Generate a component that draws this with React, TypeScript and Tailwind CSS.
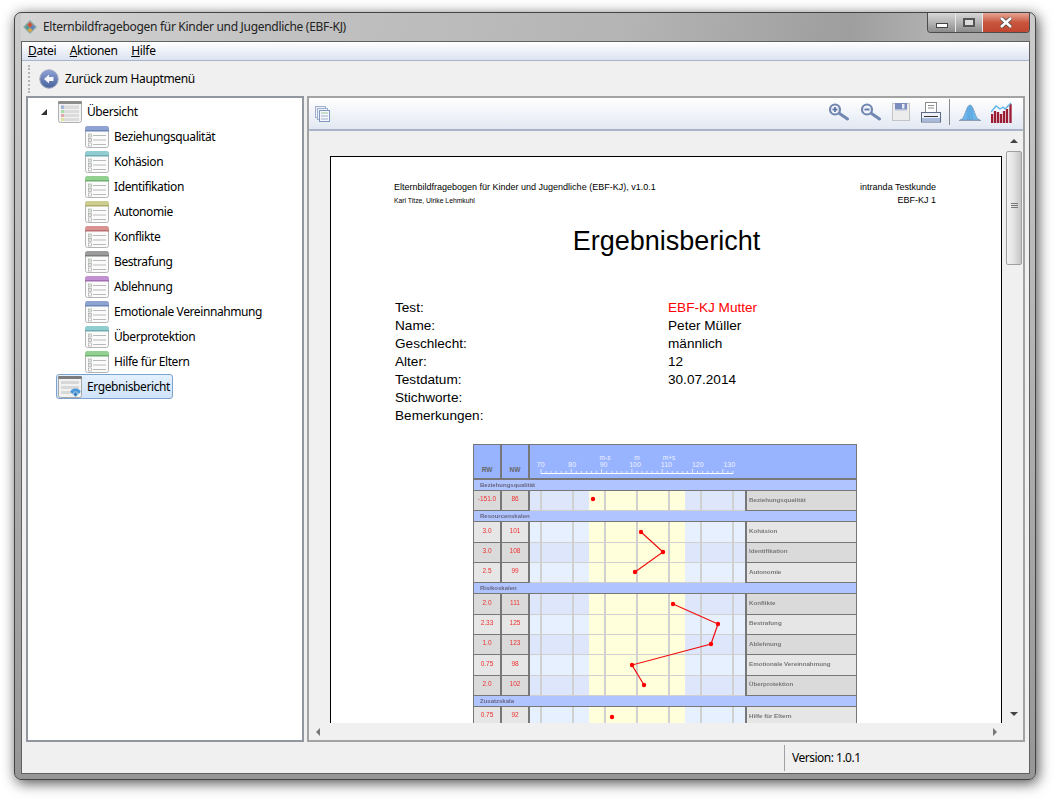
const treeItems = [
  { label: 'Beziehungsqualität', strip: '#8ea3d2', line: '#6f86b8' },
  { label: 'Kohäsion', strip: '#8fcdd0', line: '#6fabb0' },
  { label: 'Identifikation', strip: '#93d193', line: '#6fb06f' },
  { label: 'Autonomie', strip: '#cdcd8f', line: '#adad6c' },
  { label: 'Konflikte', strip: '#d99393', line: '#bb7070' },
  { label: 'Bestrafung', strip: '#9c9c9c', line: '#7c7c7c' },
  { label: 'Ablehnung', strip: '#c191d1', line: '#a06fb2' },
  { label: 'Emotionale Vereinnahmung', strip: '#8ea3d2', line: '#6f86b8' },
  { label: 'Überprotektion', strip: '#8fcdd0', line: '#6fabb0' },
  { label: 'Hilfe für Eltern', strip: '#93d193', line: '#6fb06f' }
]

const meta = [
  ['Test:', 'EBF-KJ Mutter'],
  ['Name:', 'Peter Müller'],
  ['Geschlecht:', 'männlich'],
  ['Alter:', '12'],
  ['Testdatum:', '30.07.2014'],
  ['Stichworte:', ''],
  ['Bemerkungen:', '']
]

// one row of the plot, left to right
const segments = [
  { width: 'w-[10px]', line: false, yellow: false },
  { width: 'w-[32px]', line: true, yellow: false },
  { width: 'w-[17px]', line: true, yellow: false },
  { width: 'w-[15px]', line: false, yellow: true },
  { width: 'w-[32px]', line: true, yellow: true },
  { width: 'w-[32px]', line: true, yellow: true },
  { width: 'w-[17px]', line: true, yellow: true },
  { width: 'w-[15px]', line: false, yellow: false },
  { width: 'w-[32px]', line: true, yellow: false },
  { width: 'w-[13px]', line: true, yellow: false }
]

type Block =
  | { band: string }
  | { rw: string; nw: string; label: string; dark: boolean }

const chartRows: Block[] = [
  { band: 'Beziehungsqualität' },
  { rw: '-151.0', nw: '86', label: 'Beziehungsqualität', dark: true },
  { band: 'Resourcenskalen' },
  { rw: '3.0', nw: '101', label: 'Kohäsion', dark: false },
  { rw: '3.0', nw: '108', label: 'Identifikation', dark: true },
  { rw: '2.5', nw: '99', label: 'Autonomie', dark: false },
  { band: 'Risikoskalen' },
  { rw: '2.0', nw: '111', label: 'Konflikte', dark: true },
  { rw: '2.33', nw: '125', label: 'Bestrafung', dark: false },
  { rw: '1.0', nw: '123', label: 'Ablehnung', dark: true },
  { rw: '0.75', nw: '98', label: 'Emotionale Vereinnahmung', dark: false },
  { rw: '2.0', nw: '102', label: 'Überprotektion', dark: true },
  { band: 'Zusatzskala' },
  { rw: '0.75', nw: '92', label: 'Hilfe für Eltern', dark: false }
]

function AppIcon() {
  return (
    <svg width="16" height="16" viewBox="0 0 16 16">
      <path d="M8 1 L15 8 L8 15 L1 8 Z" fill="#8fa9a8" />
      <path d="M8 3 L11 6 L8 9 L5 6 Z" fill="#c8563c" />
      <path d="M5 6 L8 9 L5.5 11 L3 8 Z" fill="#4f9a94" />
      <path d="M11 6 L13 8 L10.5 11 L8 9 Z" fill="#5c7fc0" />
      <path d="M8 9 L10.5 11 L8 13.5 L5.5 11 Z" fill="#d9a441" />
    </svg>
  )
}

function ListIcon({ strip, line }: { strip: string; line: string }) {
  return (
    <svg className="shrink-0" width="24" height="22" viewBox="0 0 24 22">
      <rect x="0.5" y="0.5" width="23" height="21" rx="2" fill="#fbfbfb" stroke="#b4b4b4" />
      <path d="M0 3 a3 3 0 0 1 3 -3 H21 a3 3 0 0 1 3 3 V4 H0 Z" fill={strip} />
      <rect x="0" y="4" width="24" height="1.5" fill={line} />
      <rect x="3.5" y="8" width="3" height="3" fill="#e4e4e4" stroke="#a8b8a8" strokeWidth="0.7" />
      <rect x="3.5" y="12.5" width="3" height="3" fill="#e4e4e4" stroke="#a8a8a8" strokeWidth="0.7" />
      <rect x="3.5" y="17" width="3" height="3" fill="#fff" stroke="#a8a8a8" strokeWidth="0.7" />
      <path d="M8 9.5 H21 M8 14 H21 M8 18.5 H21" stroke="#b9b9b9" />
    </svg>
  )
}

function RootIcon() {
  return (
    <svg className="shrink-0" width="24" height="22" viewBox="0 0 24 22">
      <rect x="0.5" y="0.5" width="23" height="21" rx="2" fill="#f2f2f2" stroke="#b0b0b0" />
      <rect x="0" y="0" width="24" height="3" rx="1" fill="#8c8c8c" />
      <rect x="3" y="4.5" width="18" height="3.5" fill="#dcdcdc" />
      <rect x="3" y="9" width="18" height="3" fill="#dcdcdc" />
      <rect x="3" y="13" width="18" height="3" fill="#dcdcdc" />
      <rect x="3" y="17" width="18" height="3" fill="#dcdcdc" />
      <rect x="3" y="4.5" width="3" height="3.5" fill="#a3b4dc" />
      <rect x="3" y="9" width="3" height="3" fill="#a8dba8" />
      <rect x="3" y="13" width="3" height="3" fill="#e0a8a8" />
      <rect x="3" y="17" width="3" height="3" fill="#e2e2a0" />
    </svg>
  )
}

function ReportIcon() {
  return (
    <svg className="shrink-0" width="24" height="22" viewBox="0 0 24 22">
      <rect x="0.5" y="0.5" width="23" height="21" rx="2" fill="#f2f2f2" stroke="#a8a8a8" />
      <rect x="0" y="0" width="24" height="3" rx="1" fill="#7c7c7c" />
      <rect x="3" y="5" width="18" height="3" fill="#d8d8d8" />
      <rect x="3" y="10" width="18" height="3" fill="#d8d8d8" />
      <rect x="3" y="15" width="10" height="3" fill="#d8d8d8" />
      <ellipse cx="17.5" cy="15.5" rx="5" ry="3" fill="#4a97d8" />
      <path d="M16 16 H19 V18 H20.5 L17.5 21 L14.5 18 H16 Z" fill="#2f7cc0" stroke="#fff" strokeWidth="0.5" />
    </svg>
  )
}

function BackIcon() {
  return (
    <svg width="20" height="20" viewBox="0 0 20 20">
      <defs>
        <linearGradient id="backFill" x1="0" y1="0" x2="0" y2="1">
          <stop offset="0" stopColor="#8ea2d6" />
          <stop offset="1" stopColor="#47619c" />
        </linearGradient>
      </defs>
      <circle cx="10" cy="10" r="9.2" fill="url(#backFill)" stroke="#9aa6bb" />
      <path d="M5 10 L10 5.5 V8 H14.5 V12 H10 V14.5 Z" fill="#f4f6fb" />
    </svg>
  )
}

function MagnifierIcon({ plus }: { plus?: boolean }) {
  return (
    <svg width="22" height="18" viewBox="0 0 22 18">
      <circle cx="7" cy="6.5" r="5" fill="#eef2fa" stroke="#7187b0" strokeWidth="2.2" />
      <path d="M11.5 10.5 L19.5 16" stroke="#7187b0" strokeWidth="3" strokeLinecap="round" />
      <path d="M4.5 6.5 H9.5" stroke="#5f77a6" strokeWidth="1.8" />
      {plus && <path d="M7 4 V9" stroke="#5f77a6" strokeWidth="1.8" />}
    </svg>
  )
}

function SaveIcon() {
  return (
    <svg width="18" height="18" viewBox="0 0 18 18">
      <rect x="0.5" y="0.5" width="17" height="17" fill="#ececec" stroke="#c4c4c4" />
      <rect x="3" y="0" width="12" height="6.5" fill="#7a8cc0" />
      <rect x="10" y="1" width="2.5" height="4.5" fill="#e8ecf6" />
      <path d="M3 7 H15" stroke="#b9c2d8" />
    </svg>
  )
}

function PrintIcon() {
  return (
    <svg width="20" height="21" viewBox="0 0 20 21">
      <rect x="4.5" y="0.5" width="11" height="10" fill="#fff" stroke="#8b8b8b" />
      <path d="M7 3.5 H13 M7 6 H13" stroke="#8b8b8b" />
      <rect x="0.5" y="10.5" width="19" height="9.5" fill="#eef1f7" stroke="#5d6b86" />
      <rect x="1" y="16" width="18" height="3.5" fill="#a9bbdc" />
      <path d="M3 14.5 H17" stroke="#333" />
    </svg>
  )
}

function BellIcon() {
  return (
    <svg width="22" height="19" viewBox="0 0 22 19">
      <path d="M1 17 C6 17 7 2 11 2 C15 2 16 17 21 17 Z" fill="#69b7ee" stroke="#7f98b8" strokeWidth="0.8" />
      <path d="M9 4 V17 M11 2 V17 M13 4 V17" stroke="#4f95cc" strokeWidth="0.7" />
      <path d="M0 17.5 H22" stroke="#8d9db3" />
    </svg>
  )
}

function BarsIcon() {
  return (
    <svg width="21" height="21" viewBox="0 0 21 21">
      <path d="M1 21 V12 M4 21 V9 M7 21 V10 M10 21 V12 M13 21 V9 M16 21 V7 M19.5 21 V2" stroke="#9c1c34" strokeWidth="2.3" />
      <path d="M0 10 L5 4 L9 7 L12 5 L14 7 L20 1" fill="none" stroke="#5cb2e8" strokeWidth="1.3" />
    </svg>
  )
}

function PagesIcon() {
  return (
    <svg width="15" height="16" viewBox="0 0 15 16">
      <rect x="0.5" y="0.5" width="10" height="11" fill="#eef2f8" stroke="#9fb0cc" />
      <rect x="2.5" y="2.5" width="10" height="11" fill="#eef2f8" stroke="#9fb0cc" />
      <rect x="4.5" y="4.5" width="10" height="11" fill="#f6f8fc" stroke="#7f98c0" />
      <path d="M6 7 H13" stroke="#9cc79c" />
      <path d="M6 10 H13 M6 13 H13" stroke="#9fb0cc" />
    </svg>
  )
}

function Chart() {
  return (
    <div className="relative ml-[79px] h-[300px] w-[384px] overflow-hidden border-x border-t border-[#777777] font-['Liberation_Sans',sans-serif] blur-[0.4px]">
      <div className="flex h-[35px] border-b-2 border-[#777777] bg-[#99b4ff] text-[6.5px]">
        <div className="flex w-[28px] items-end justify-center border-r-2 border-[#777777] pb-[3px] font-bold text-[#666666]">RW</div>
        <div className="flex w-[28px] items-end justify-center border-r-2 border-[#777777] pb-[3px] font-bold text-[#666666]">NW</div>
        <div className="flex w-[215px] flex-col text-[#eef2ff]">
          <div className="mt-[9px] flex h-[7px] items-center pl-[59px]">
            <span className="w-[32px] text-center">m-s</span>
            <span className="w-[32px] text-center">m</span>
            <span className="w-[32px] text-center">m+s</span>
          </div>
          <div className="-ml-[5px] flex h-[8px] items-center">
            {['70', '80', '90', '100', '110', '120', '130'].map(tick => (
              <span key={tick} className="w-[32px] text-center text-[7px]">{tick}</span>
            ))}
          </div>
          <svg width="215" height="5" viewBox="0 0 215 5">
            <path d="M11 4.5 H203" stroke="#fff" />
            {Array.from({ length: 39 }, (_, i) => (
              <path key={i} d={`M${11 + i * 5.05} ${i % 6 === 0 ? 0 : 2} V5`} stroke="#fff" strokeWidth="0.7" />
            ))}
          </svg>
        </div>
      </div>
      {chartRows.map((row, i) =>
        'band' in row ? (
          <div key={i} className="flex h-[11px] items-center border-b border-[#777777] bg-[#b0c4ff] pl-[6px] text-[6px] font-bold text-[#666680]">
            {row.band}
          </div>
        ) : (
          <div key={i} className="flex h-[20.35px] text-[6.5px]">
            <div className={`flex w-[28px] items-center justify-center border-b border-r-2 border-[#777777] pb-[3px] text-[#f03030] ${row.dark ? 'bg-[#dadada]' : 'bg-[#e6e6e6]'}`}>{row.rw}</div>
            <div className={`flex w-[28px] items-center justify-center border-b border-r-2 border-[#777777] pb-[3px] text-[#f03030] ${row.dark ? 'bg-[#dadada]' : 'bg-[#e6e6e6]'}`}>{row.nw}</div>
            <div className="flex w-[215px] border-b border-[#d0d0d0]">
              {segments.map((segment, j) => (
                <div
                  key={j}
                  className={`${segment.width} ${segment.line ? 'border-l-2 border-[#d0d0d0]' : ''} ${segment.yellow ? 'bg-[#ffffdc]' : row.dark ? 'bg-[#dde6fb]' : 'bg-[#e7f0ff]'}`}
                />
              ))}
            </div>
            <div className={`flex flex-1 items-center border-b border-l-2 border-[#777777] pb-[3px] pl-[2px] text-[6.2px] font-bold text-[#777777] ${row.dark ? 'bg-[#dadada]' : 'bg-[#e6e6e6]'}`}>{row.label}</div>
          </div>
        )
      )}
      <svg className="absolute left-0 top-0" width="384" height="300" viewBox="473 444 384 300">
        <g fill="none" stroke="#f01010" strokeWidth="1.2">
          <path d="M640 531 L662 551 L634 571" />
          <path d="M672 603 L717 623 L710 643 L631 664 L643 684" />
        </g>
        <g fill="#ff0000">
          {[
            [592, 498],
            [640, 531],
            [662, 551],
            [634, 571],
            [672, 603],
            [717, 623],
            [710, 643],
            [631, 664],
            [643, 684],
            [611, 716]
          ].map(([x, y]) => (
            <circle key={x} cx={x} cy={y} r="2.2" />
          ))}
        </g>
      </svg>
    </div>
  )
}

function VerticalScrollbar() {
  return (
    <div className="flex w-[16px] flex-col items-center">
      <div className="flex h-[20px] items-center text-[0px]">
        <span className="border-x-[4px] border-b-[4px] border-x-transparent border-b-[#444444]" />
      </div>
      <div className="flex h-[114px] w-full items-center justify-center rounded-[2px] border border-[#a0a0a0] bg-gradient-to-r from-[#f4f4f4] via-[#e2e2e2] to-[#c4c4c4] pb-[6px]">
        <div className="flex w-[7px] flex-col gap-[1px]">
          <div className="h-px bg-[#777777]" />
          <div className="h-px bg-[#777777]" />
          <div className="h-px bg-[#777777]" />
        </div>
      </div>
      <div className="flex-1" />
      <div className="flex h-[18px] items-center">
        <span className="border-x-[4px] border-t-[4px] border-x-transparent border-t-[#444444]" />
      </div>
    </div>
  )
}

export default function App() {
  return (
    <div className="h-[799px] w-[1055px] overflow-hidden bg-white pl-[14px] pt-[12px] font-['Noto_Sans',sans-serif] text-[12px] tracking-[-0.3px] text-black">
      <div className="flex h-[768px] w-[1022px] flex-col rounded-[7px] border border-[#444444] bg-gradient-to-b from-[#cccccc] to-[#969696] pb-[6px] pl-[6px] pr-[5px] shadow-[2px_3px_14px_rgba(0,0,0,0.7)]">
        <div className="flex h-[28px] items-start justify-between bg-[linear-gradient(100deg,#d4d4d4_0%,#c2c2c2_25%,#b4b4b4_60%,#9e9e9e_82%,#b0b0b0_90%,#a4a4a4_100%)]">
          <div className="flex h-[28px] items-center gap-[5px] pl-[1px]">
            <AppIcon />
            <span className="text-[#222222]">Elternbildfragebogen für Kinder und Jugendliche (EBF-KJ)</span>
          </div>
          <div className="flex h-[20px] w-[103px] overflow-hidden rounded-b-[4px] border border-t-0 border-[#4c4c4c]">
            <div className="flex w-[28px] items-center justify-center border-r border-[#e8e8e8] bg-gradient-to-b from-[#d8d8d8] via-[#b4b4b4] to-[#8c8c8c] pt-[6px]">
              <div className="h-[5px] w-[12px] border border-[#444444] bg-white" />
            </div>
            <div className="flex w-[27px] items-center justify-center border-r border-[#e8e8e8] bg-gradient-to-b from-[#d8d8d8] via-[#b4b4b4] to-[#8c8c8c]">
              <div className="h-[9px] w-[12px] border-2 border-[#555555] bg-[#dddddd]" />
            </div>
            <div className="flex flex-1 items-center justify-center bg-gradient-to-b from-[#e4a696] via-[#c9553f] to-[#bf4630]">
              <svg width="14" height="11" viewBox="0 0 14 11">
                <path d="M2 1 L12 10 M12 1 L2 10" stroke="#444444" strokeWidth="4" />
                <path d="M2 1 L12 10 M12 1 L2 10" stroke="#ffffff" strokeWidth="2.6" />
              </svg>
            </div>
          </div>
        </div>

        <div className="flex flex-1 flex-col border border-[#606060] bg-[#f0f0f0]">
          <div className="flex h-[19px] items-center gap-[13.5px] border-b border-[#aab4c8] bg-gradient-to-b from-white to-[#dbe2f1] pl-[6px]">
            <span><u>D</u>atei</span>
            <span><u>A</u>ktionen</span>
            <span><u>H</u>ilfe</span>
          </div>
          <div className="flex h-[35px] items-center pl-[6px]">
            <div className="mr-[9px] h-[28px] border-l-2 border-dotted border-[#b4b4b4]" />
            <BackIcon />
            <span className="ml-[6px] tracking-[-0.35px]">Zurück zum Hauptmenü</span>
          </div>

          <div className="flex flex-1 gap-[3px] pl-[4px] pr-[4px]">
            <div className="w-[278px] border-2 border-[#92979f] bg-white pt-[1px] tracking-[-0.4px]">
              <div className="flex h-[25px] items-center pl-[13px]">
                <span className="mr-[11px] h-0 w-0 border-b-[6px] border-l-[6px] border-b-[#333333] border-l-transparent" />
                <RootIcon />
                <span className="ml-[5px]">Übersicht</span>
              </div>
              {treeItems.map(item => (
                <div key={item.label} className="flex h-[25px] items-center pl-[57px]">
                  <ListIcon strip={item.strip} line={item.line} />
                  <span className="ml-[5px]">{item.label}</span>
                </div>
              ))}
              <div className="ml-[28px] flex h-[25px] w-[117px] items-center rounded-[3px] border border-[#7da2ce] bg-gradient-to-b from-[#e4f0fd] to-[#cfe3fb] pl-[1px]">
                <ReportIcon />
                <span className="ml-[5px]">Ergebnisbericht</span>
              </div>
            </div>

            <div className="flex flex-1 flex-col border-2 border-[#a3a3a3]">
              <div className="flex h-[33px] items-center border-b-2 border-[#aab4c8] bg-gradient-to-b from-white to-[#e2e8f3] pl-[6px] pr-[11px]">
                <PagesIcon />
                <div className="flex-1" />
                <div className="mb-[3px] flex items-center">
                  <MagnifierIcon plus />
                  <div className="ml-[10px]"><MagnifierIcon /></div>
                  <div className="ml-[10px]"><SaveIcon /></div>
                  <div className="ml-[11px]"><PrintIcon /></div>
                  <div className="ml-[8px] mr-[9px] h-[26px] border-l border-[#8a8a8a]" />
                  <BellIcon />
                  <div className="ml-[10px]"><BarsIcon /></div>
                </div>
              </div>

              <div className="flex min-h-0 flex-1">
                <div className="h-[592px] flex-1 overflow-hidden pl-[21px] pt-[25px]">
                  <div className="h-[600px] w-[672px] border border-black bg-white pl-[63px] font-['Liberation_Sans',sans-serif] tracking-normal">
                    <div className="flex justify-between pr-[65px] pt-[24px] text-[9px] leading-[13px]">
                      <div>
                        <div>Elternbildfragebogen für Kinder und Jugendliche (EBF-KJ), v1.0.1</div>
                        <div className="text-[6.8px]">Karl Titze, Ulrike Lehmkuhl</div>
                      </div>
                      <div className="text-right">
                        <div>intranda Testkunde</div>
                        <div>EBF-KJ 1</div>
                      </div>
                    </div>
                    <h1 className="mt-[18px] pr-[62px] text-center text-[27px] leading-[32px]">Ergebnisbericht</h1>
                    <div className="ml-[1px] mt-[42px]">
                      {meta.map(([key, value]) => (
                        <div key={key} className="flex h-[18px] items-center text-[13.6px]">
                          <span className="w-[273px]">{key}</span>
                          <span className={key === 'Test:' ? 'text-[#ff0000]' : ''}>{value}</span>
                        </div>
                      ))}
                    </div>
                    <div className="mt-[19px]">
                      <Chart />
                    </div>
                  </div>
                </div>
                <VerticalScrollbar />
                <div className="w-[1px]" />
              </div>

              <div className="flex h-[17px] items-center justify-between px-[7px]">
                <span className="border-y-[4px] border-r-[4px] border-y-transparent border-r-[#777777]" />
                <span className="mr-[19px] border-y-[4px] border-l-[4px] border-y-transparent border-l-[#777777]" />
              </div>
            </div>
          </div>

          <div className="flex h-[31px] items-center justify-end">
            <div className="flex h-[26px] w-[245px] items-center border-l border-[#a0a0a0] pl-[7px] tracking-[-0.5px]">Version: 1.0.1</div>
          </div>
        </div>
      </div>
    </div>
  )
}
